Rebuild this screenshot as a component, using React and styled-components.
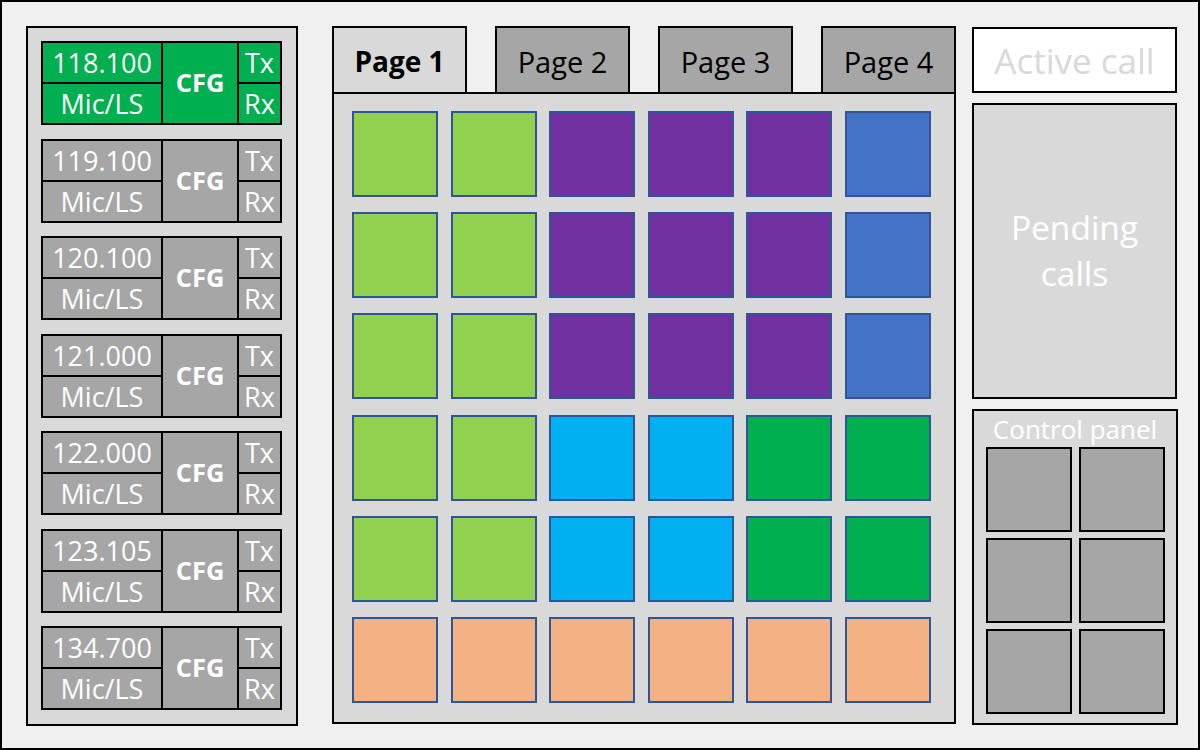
import React from "react";
import styled, { createGlobalStyle } from "styled-components";

const radios = ["118.100", "119.100", "120.100", "121.000", "122.000", "123.105", "134.700"];
const tabs = ["Page 1", "Page 2", "Page 3", "Page 4"];

const C = {
  g: "#92d050",
  p: "#7030a0",
  b: "#4472c4",
  c: "#00b0f0",
  d: "#00b050",
  o: "#f4b183",
};

const layout = [
  "ggpppb",
  "ggpppb",
  "ggpppb",
  "ggccdd",
  "ggccdd",
  "oooooo",
];

export default function App() {
  return (
    <>
      <GlobalStyle />
      <Frame>
        <RadioPanel>
          {radios.map((freq, i) => (
            <RadioRow key={freq} active={i === 0}>
              <Freq>{freq}</Freq>
              <Cfg>CFG</Cfg>
              <Small>Tx</Small>
              <Freq>Mic/LS</Freq>
              <Small>Rx</Small>
            </RadioRow>
          ))}
        </RadioPanel>

        <Middle>
          <TabBar>
            {tabs.map((t, i) => (
              <Tab key={t} active={i === 0}>
                {t}
              </Tab>
            ))}
          </TabBar>
          <KeyPanel>
            <KeyGrid>
              {layout.flatMap((row, r) =>
                row.split("").map((k, c) => <Key key={`${r}-${c}`} color={C[k]} />)
              )}
            </KeyGrid>
          </KeyPanel>
        </Middle>

        <RightColumn>
          <ActiveCall>Active call</ActiveCall>
          <Pending>
            Pending
            <br />
            calls
          </Pending>
          <ControlPanel>
            <ControlTitle>Control panel</ControlTitle>
            <ControlGrid>
              {Array.from({ length: 6 }).map((_, i) => (
                <ControlButton key={i} />
              ))}
            </ControlGrid>
          </ControlPanel>
        </RightColumn>
      </Frame>
    </>
  );
}

const GlobalStyle = createGlobalStyle`
  body {
    margin: 0;
    font-family: "Open Sans", "Liberation Sans", sans-serif;
  }
`;

const Frame = styled.div`
  box-sizing: border-box;
  width: 1200px;
  height: 750px;
  border: 2px solid #000;
  background: #f0f0f0;
  display: flex;
  padding: 24px 20px 22px 24px;
`;

const RadioPanel = styled.div`
  box-sizing: border-box;
  width: 272px;
  height: 700px;
  border: 2px solid #000;
  background: #d9d9d9;
  padding: 13px 13px 14px 13px;
  display: flex;
  flex-direction: column;
  justify-content: space-between;
`;

const RadioRow = styled.div`
  display: grid;
  grid-template-columns: 118px 74px 41px;
  grid-template-rows: 39px 39px;
  gap: 2px;
  border: 2px solid #000;
  background: #000;
  width: max-content;

  & > * {
    background: ${(p) => (p.active ? "#00b050" : "#a6a6a6")};
  }
`;

const Cell = styled.div`
  display: flex;
  align-items: center;
  justify-content: center;
  color: #fff;
  font-size: 27px;
  line-height: 1;
  white-space: nowrap;
`;

const Freq = styled(Cell)``;

const Small = styled(Cell)`
  font-size: 27px;
`;

const Cfg = styled(Cell)`
  grid-row: 1 / span 2;
  grid-column: 2;
  font-weight: 700;
  font-size: 25.5px;
`;

const Middle = styled.div`
  margin-left: 34px;
  width: 624px;
  display: flex;
  flex-direction: column;
`;

const TabBar = styled.div`
  display: flex;
  justify-content: space-between;
  height: 66px;
`;

const Tab = styled.div`
  box-sizing: border-box;
  width: 135px;
  height: 68px;
  border: 2px solid #000;
  background: ${(p) => (p.active ? "#d9d9d9" : "#a6a6a6")};
  font-weight: ${(p) => (p.active ? 700 : 400)};
  font-size: ${(p) => (p.active ? "28px" : "29px")};
  color: #000;
  display: flex;
  align-items: center;
  justify-content: center;
  padding-top: 2px;
  white-space: nowrap;
`;

const KeyPanel = styled.div`
  box-sizing: border-box;
  height: 632px;
  border: 2px solid #000;
  background: #d9d9d9;
  padding: 17px 0 0 18px;
`;

const KeyGrid = styled.div`
  display: grid;
  grid-template-columns: repeat(6, 86px);
  grid-auto-rows: 86px;
  column-gap: 12.6px;
  row-gap: 15.2px;
`;

const Key = styled.div`
  box-sizing: border-box;
  border: 2px solid #2f5597;
  background: ${(p) => p.color};
`;

const RightColumn = styled.div`
  margin-left: 16px;
  width: 206px;
  display: flex;
  flex-direction: column;
  padding-top: 1px;
`;

const ActiveCall = styled.div`
  box-sizing: border-box;
  width: 205px;
  height: 66px;
  border: 2px solid #000;
  background: #fff;
  color: #d9d9d9;
  font-size: 35px;
  display: flex;
  align-items: center;
  justify-content: center;
  white-space: nowrap;
`;

const Pending = styled.div`
  box-sizing: border-box;
  width: 205px;
  height: 296px;
  margin-top: 10px;
  border: 2px solid #000;
  background: #d9d9d9;
  color: #fff;
  font-size: 33.5px;
  line-height: 46px;
  text-align: center;
  display: flex;
  align-items: center;
  justify-content: center;
  padding-bottom: 2px;
`;

const ControlPanel = styled.div`
  box-sizing: border-box;
  width: 206px;
  height: 316px;
  margin-top: 10px;
  border: 2px solid #000;
  background: #d9d9d9;
  display: flex;
  flex-direction: column;
  align-items: center;
`;

const ControlTitle = styled.div`
  color: #fff;
  font-size: 26px;
  line-height: 36px;
  height: 36px;
  white-space: nowrap;
`;

const ControlGrid = styled.div`
  display: grid;
  grid-template-columns: repeat(2, 86px);
  grid-auto-rows: 85px;
  column-gap: 7px;
  row-gap: 6px;
`;

const ControlButton = styled.div`
  box-sizing: border-box;
  border: 2px solid #000;
  background: #a6a6a6;
`;
